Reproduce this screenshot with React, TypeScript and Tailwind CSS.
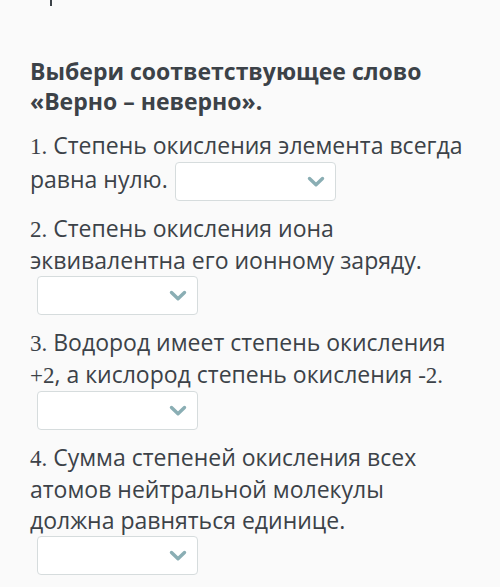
import React from 'react';

const items = [
  { n: '1.', parts: ['Степень окисления элемента всегда равна нулю.'], inline: true, gap: '' },
  { n: '2.', parts: ['Степень окисления иона эквивалентна его ионному заряду.'], inline: false, gap: 'mt-[12px]' },
  { n: '3.', parts: ['Водород имеет степень окисления ', '+2', ', а кислород степень окисления ', '-2.'], inline: false, gap: 'mt-[12px]' },
  { n: '4.', parts: ['Сумма степеней окисления всех атомов нейтральной молекулы должна равняться единице.'], inline: false, gap: 'mt-[12px]' },
];

function Chevron() {
  return (
    <svg width="18" height="12" viewBox="0 0 18 12" className="text-[#8aaeb4]">
      <path d="M2.5 2.5 L9 8.8 L15.5 2.5" fill="none" stroke="currentColor" strokeWidth="3.4" strokeLinecap="round" strokeLinejoin="round" />
    </svg>
  );
}

function Select({ className = '' }: { className?: string }) {
  return (
    <span className={`inline-flex items-center justify-end w-[161px] h-[39px] pr-[10px] bg-white border border-[#d6dcdd] rounded-[4px] align-middle ${className}`}>
      <Chevron />
    </span>
  );
}

export default function App() {
  return (
    <div className="min-h-[587px] bg-[#fafafa] text-[#3c4248] font-['Open_Sans',sans-serif]">
      {/* обрезанный элемент сверху */}
      <div className="ml-[50px] w-[2px] h-[6px] bg-[#3c4248]" />

      <div className="px-[30px] pt-[50px]">
        <h2 className="text-[23px] font-bold leading-[30px]">
          Выбери соответствующее слово
          <br />
          «Верно – неверно».
        </h2>

        <div className="mt-[14px] text-[23px] leading-[31px]">
          {items.map((item, i) => (
            <div key={i} className={item.gap}>
              <span className="font-['Liberation_Serif',serif]">{item.n}</span>{' '}
              {item.parts.map((p, j) =>
                j % 2 === 1 ? (
                  <span key={j} className="font-['Liberation_Serif',serif]">{p}</span>
                ) : (
                  <span key={j}>{p}</span>
                )
              )}
              {item.inline ? (
                <>
                  {' '}
                  <Select className="ml-[1px]" />
                </>
              ) : (
                <div className="ml-[7px]">
                  <Select />
                </div>
              )}
            </div>
          ))}
        </div>
      </div>
    </div>
  );
}
